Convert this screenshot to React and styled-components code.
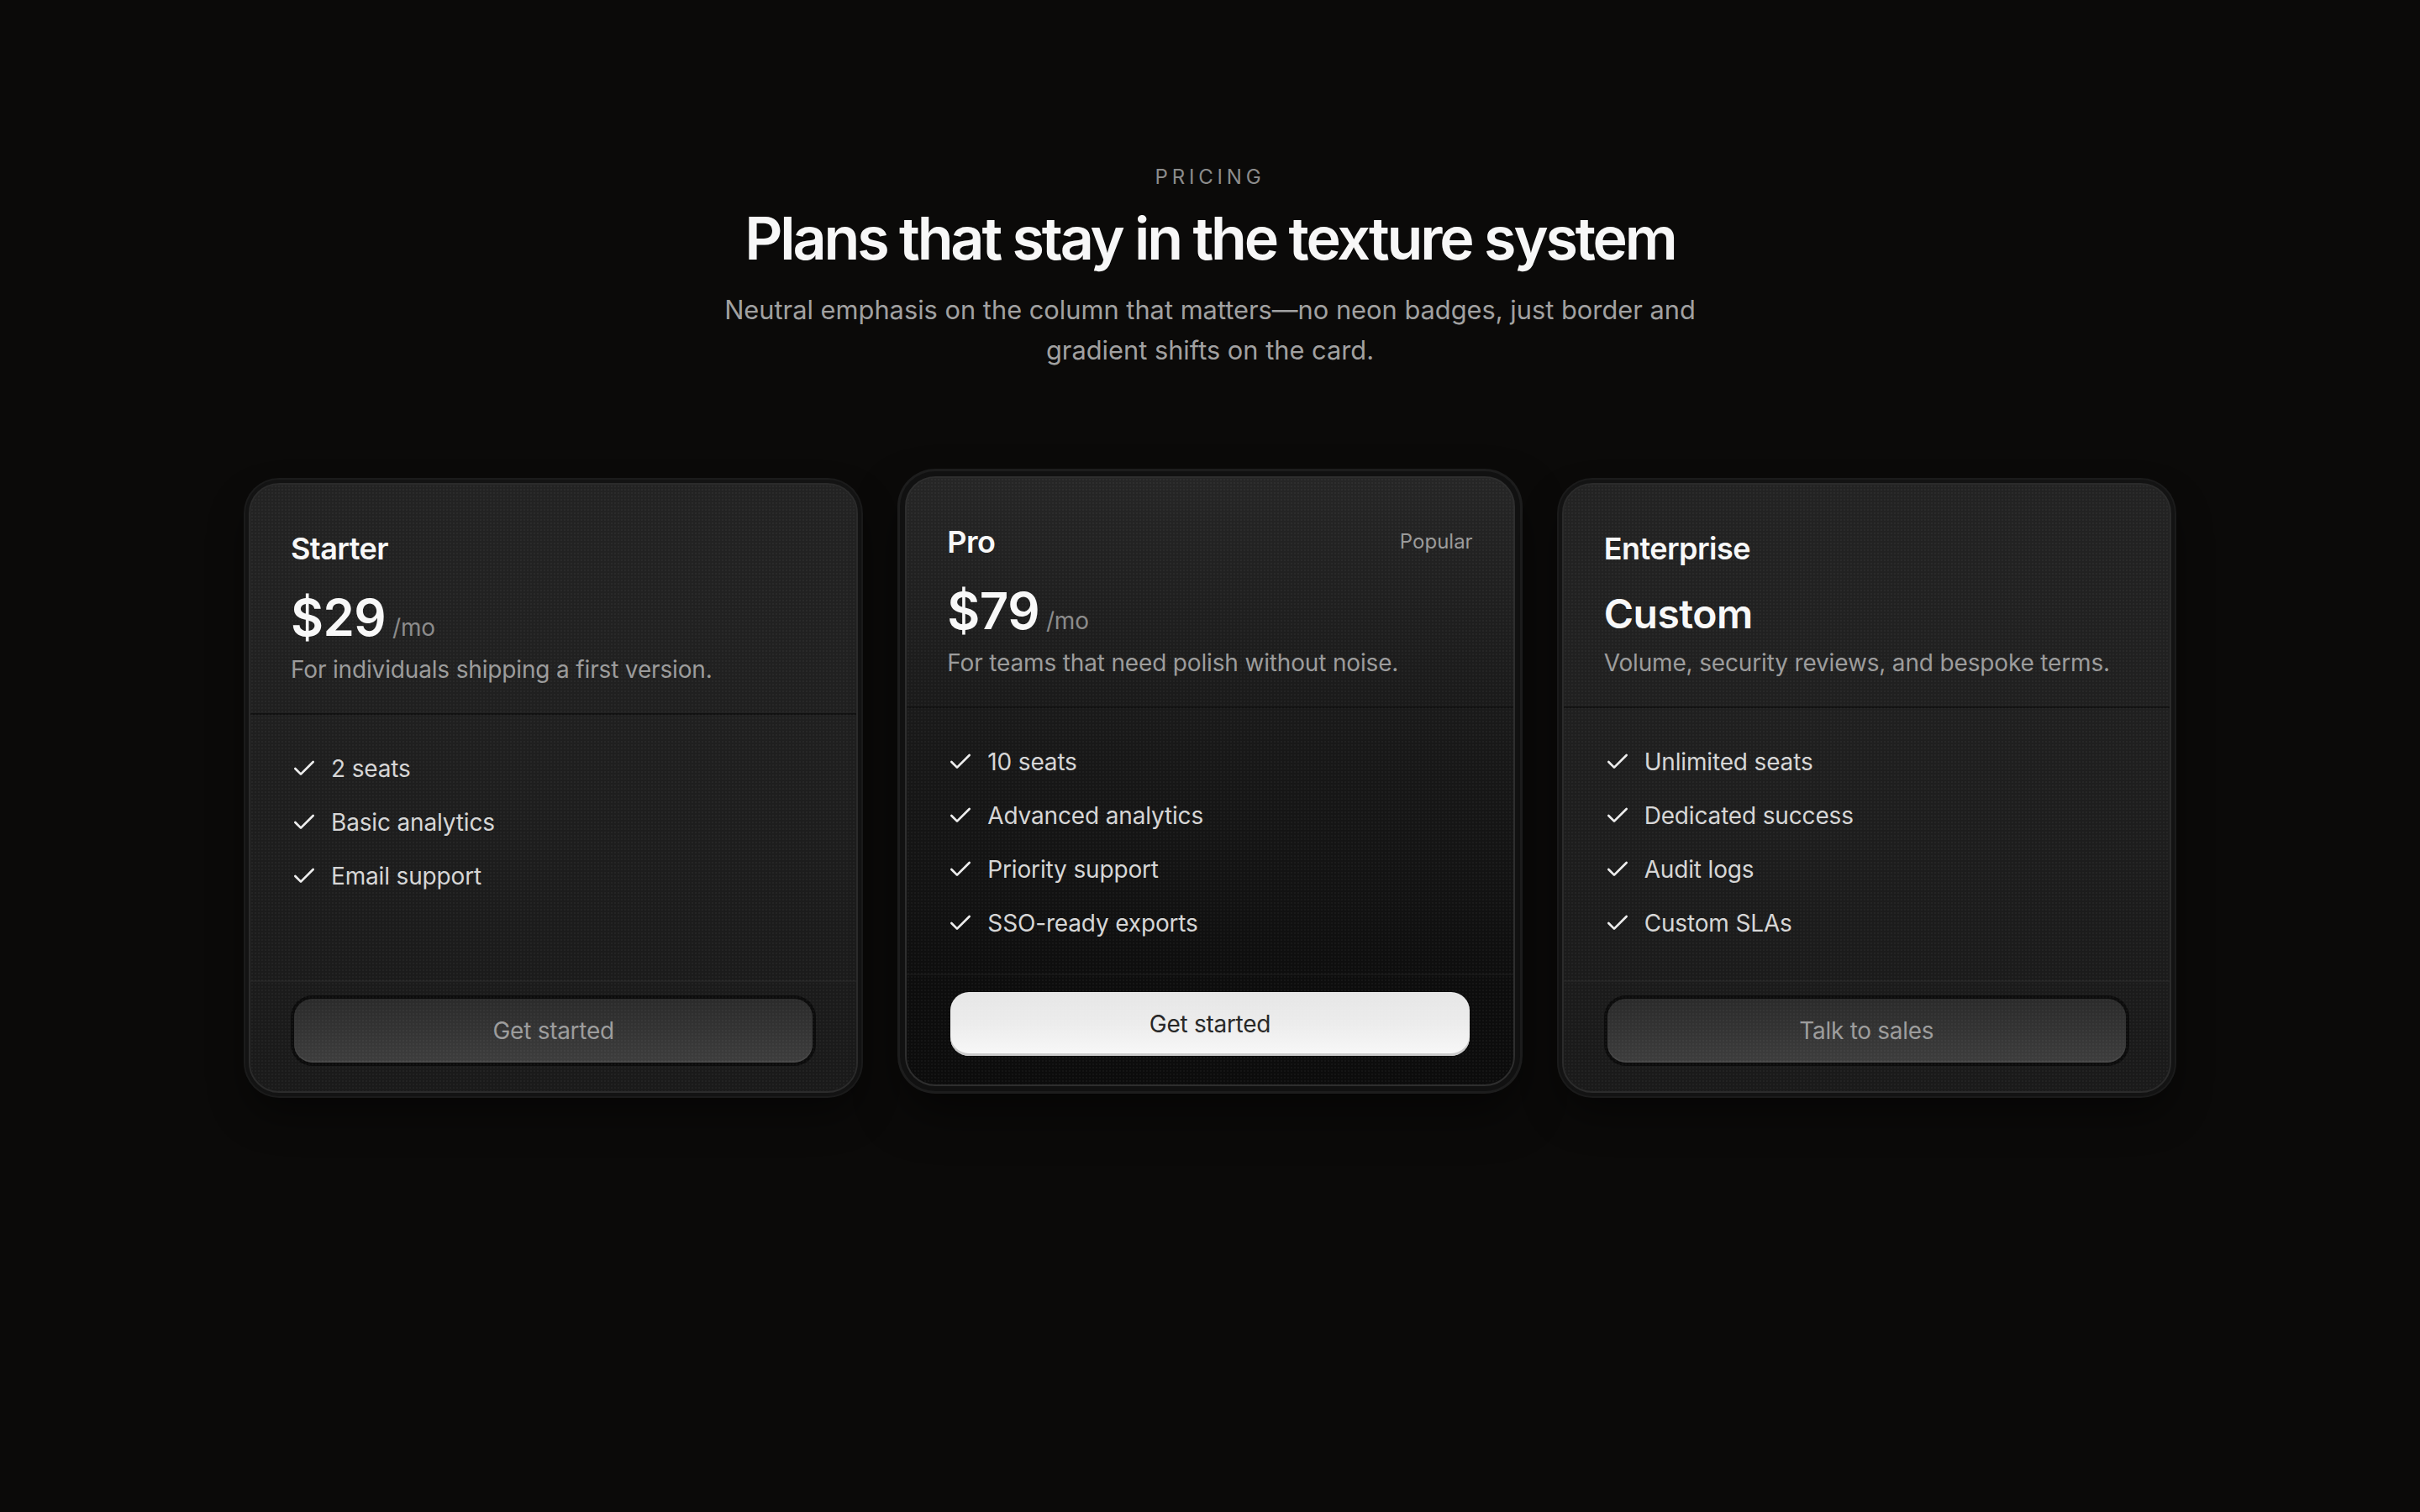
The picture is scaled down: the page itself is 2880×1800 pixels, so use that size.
import React from "react";
import styled, { createGlobalStyle, css } from "styled-components";

const GlobalStyle = createGlobalStyle`
  html, body {
    margin: 0;
    padding: 0;
    background: #0b0a09;
  }
  body {
    font-family: Inter, "Noto Sans", "Liberation Sans", sans-serif;
    color: #f5f5f5;
    -webkit-font-smoothing: antialiased;
  }
  * { box-sizing: border-box; }
`;

const plans = [
  {
    name: "Starter",
    price: "$29",
    per: "/mo",
    blurb: "For individuals shipping a first version.",
    features: ["2 seats", "Basic analytics", "Email support"],
    cta: "Get started",
  },
  {
    name: "Pro",
    price: "$79",
    per: "/mo",
    badge: "Popular",
    featured: true,
    blurb: "For teams that need polish without noise.",
    features: ["10 seats", "Advanced analytics", "Priority support", "SSO-ready exports"],
    cta: "Get started",
  },
  {
    name: "Enterprise",
    price: "Custom",
    custom: true,
    blurb: "Volume, security reviews, and bespoke terms.",
    features: ["Unlimited seats", "Dedicated success", "Audit logs", "Custom SLAs"],
    cta: "Talk to sales",
  },
];

const Page = styled.main`
  min-height: 1800px;
  padding-top: 195px;
`;

const Intro = styled.header`
  display: flex;
  flex-direction: column;
  align-items: center;
  text-align: center;
`;

const Eyebrow = styled.div`
  font-size: 24px;
  line-height: 32px;
  letter-spacing: 0.2em;
  color: #8c8c8c;
  text-transform: uppercase;
`;

const Heading = styled.h1`
  margin: 17px 0 0;
  font-size: 70px;
  line-height: 80px;
  font-weight: 600;
  letter-spacing: -0.045em;
  color: #f7f7f7;
`;

const Lead = styled.p`
  margin: 21px 0 0;
  max-width: 1180px;
  font-size: 30.8px;
  line-height: 48px;
  color: #a1a1a1;
`;

const Grid = styled.div`
  width: 2288px;
  margin: 134px auto 0;
  display: grid;
  grid-template-columns: repeat(3, 1fr);
  gap: 56px;
  align-items: stretch;
`;

const Card = styled.article`
  position: relative;
  display: flex;
  flex-direction: column;
  border-radius: 36px;
  border: 2px solid #2b2b2b;
  background: linear-gradient(180deg, #232323 0%, #202020 35%, #1c1c1c 70%, #1a1a1a 100%);
  box-shadow: 0 0 0 4px #131313, 0 0 0 6px #1b1b1b, 0 24px 48px rgba(0, 0, 0, 0.45);
  letter-spacing: -0.01em;

  &::before {
    content: "";
    position: absolute;
    inset: 0;
    border-radius: inherit;
    pointer-events: none;
    background-image: radial-gradient(rgba(255, 255, 255, 0.035) 1px, transparent 1.2px);
    background-size: 4px 4px;
  }

  ${(p) =>
    p.$featured &&
    css`
      transform: translateY(-8px);
      border-color: #2e2e2e;
      background: linear-gradient(
        180deg,
        #262626 0%,
        #1f1f1f 22%,
        #181818 45%,
        #121212 70%,
        #0d0d0d 84%,
        #0c0c0c 100%
      );
      box-shadow: 0 0 0 6px #111111, 0 0 0 9px #1d1d1d, 0 28px 56px rgba(0, 0, 0, 0.55);
    `}
`;

const CardHead = styled.div`
  padding: 48px 48px 32px;
  border-bottom: 2px solid #111111;
`;

const TitleRow = styled.div`
  display: flex;
  align-items: center;
  justify-content: space-between;
`;

const PlanName = styled.h3`
  margin: 0;
  font-size: 36px;
  line-height: 56px;
  font-weight: 600;
  letter-spacing: -0.015em;
  color: #f8f8f8;
`;

const Badge = styled.span`
  font-size: 24px;
  line-height: 32px;
  letter-spacing: 0;
  color: #9a9a9a;
`;

const PriceRow = styled.div`
  margin-top: 18px;
  display: flex;
  align-items: baseline;
  gap: 8px;
`;

const Price = styled.span`
  font-size: ${(p) => (p.$custom ? "48px" : "60px")};
  line-height: ${(p) => (p.$custom ? "64px" : "72px")};
  font-weight: 600;
  letter-spacing: -0.01em;
  color: #f8f8f8;
`;

const Per = styled.span`
  font-size: 28px;
  color: #8a8a8a;
`;

const Blurb = styled.p`
  margin: 6px 0 0;
  font-size: 28px;
  line-height: 40px;
  color: #9b9b9b;
`;

const Features = styled.ul`
  flex: 1;
  margin: 0;
  list-style: none;
  padding: 44px 48px 40px;
  display: flex;
  flex-direction: column;
  gap: 24px;
`;

const Feature = styled.li`
  display: flex;
  align-items: center;
  gap: 16px;
  font-size: 28px;
  line-height: 40px;
  color: #d6d6d6;
`;

const CheckIcon = styled.svg`
  width: 32px;
  height: 32px;
  flex: none;
  color: #ededed;
`;

const CardFoot = styled.div`
  padding: 20px 52px 34px;
  border-top: 2px solid rgba(255, 255, 255, 0.035);
`;

const Button = styled.button`
  display: block;
  width: 100%;
  height: 76px;
  border-radius: 22px;
  font-family: inherit;
  font-size: 28px;
  letter-spacing: -0.01em;
  cursor: pointer;
  border: none;
  ${(p) =>
    p.$primary
      ? css`
          color: #262626;
          background: linear-gradient(180deg, #e6e6e6 0%, #ececec 50%, #f8f8f8 100%);
          box-shadow: inset 0 -3px 0 #c9c9c9;
        `
      : css`
          color: #9c9c9c;
          background: linear-gradient(180deg, #2b2b2b 0%, #333333 45%, #3e3e3e 100%);
          box-shadow: 0 0 0 4px #0c0c0c, inset 0 -2px 0 rgba(255, 255, 255, 0.05);
        `}
`;

const Check = () => (
  <CheckIcon viewBox="0 0 24 24" fill="none" stroke="currentColor" strokeWidth="2" strokeLinecap="round" strokeLinejoin="round">
    <path d="M20 6 9 17l-5-5" />
  </CheckIcon>
);

export default function App() {
  return (
    <Page>
      <GlobalStyle />
      <Intro>
        <Eyebrow>Pricing</Eyebrow>
        <Heading>Plans that stay in the texture system</Heading>
        <Lead>
          Neutral emphasis on the column that matters—no neon badges, just border and gradient shifts on the card.
        </Lead>
      </Intro>
      <Grid>
        {plans.map((plan) => (
          <Card key={plan.name} $featured={plan.featured}>
            <CardHead>
              <TitleRow>
                <PlanName>{plan.name}</PlanName>
                {plan.badge && <Badge>{plan.badge}</Badge>}
              </TitleRow>
              <PriceRow>
                <Price $custom={plan.custom}>{plan.price}</Price>
                {plan.per && <Per>{plan.per}</Per>}
              </PriceRow>
              <Blurb>{plan.blurb}</Blurb>
            </CardHead>
            <Features>
              {plan.features.map((f) => (
                <Feature key={f}>
                  <Check />
                  {f}
                </Feature>
              ))}
            </Features>
            <CardFoot>
              <Button $primary={plan.featured}>{plan.cta}</Button>
            </CardFoot>
          </Card>
        ))}
      </Grid>
    </Page>
  );
}
